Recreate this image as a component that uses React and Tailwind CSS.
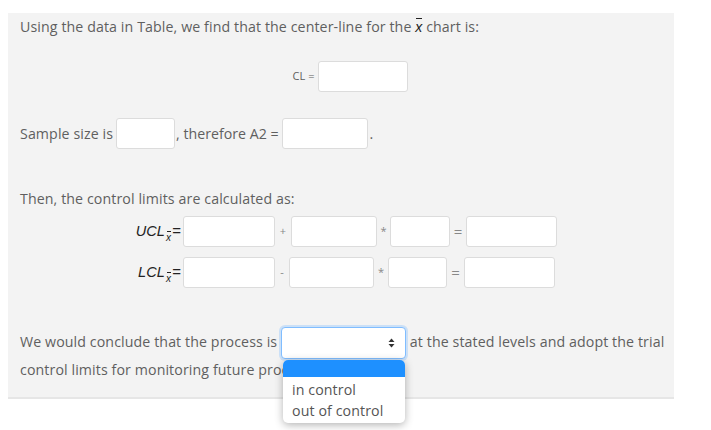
import React from "react";

const font = { fontFamily: '"Open Sans", "Liberation Sans", sans-serif' };

function Box({ w }) {
  return (
    <span
      className={`inline-block h-[31px] bg-white border border-[#dcdcdc] rounded-[3px] align-middle ${w}`}
    />
  );
}

function XBar() {
  return (
    <span className="relative inline-block italic text-[#222] text-[14px]" style={{ fontFamily: '"Liberation Sans", sans-serif' }}>
      <span className="absolute left-[1px] right-0 top-[1px] h-px bg-[#222]" />
      x
    </span>
  );
}

function MathLabel({ name }) {
  return (
    <span className="w-[55px] pr-[2px] flex items-center justify-end text-[#222]" style={{ fontFamily: '"Liberation Sans", sans-serif' }}>
      <span className="italic text-[14.5px]">{name}</span>
      <span className="relative inline-block italic text-[10px] mt-[12px] ml-[1px] leading-none">
        <span className="absolute left-[1px] right-0 -top-[2px] h-px bg-[#222]" />
        x
      </span>
      <span className="text-[15px] ml-[1px]">=</span>
    </span>
  );
}

function Op({ c, w }) {
  return <span className={`text-center text-[11px] text-[#888] ${w}`}>{c}</span>;
}

export default function App() {
  const ops = [
    { label: "UCL", sign: "+", ws: ["w-[92px]", "w-[86px]", "w-[60px]", "w-[91px]"], gaps: ["w-[16px]", "w-[13px]", "w-[16px]"] },
    { label: "LCL", sign: "-", ws: ["w-[92px]", "w-[85px]", "w-[59px]", "w-[91px]"], gaps: ["w-[14px]", "w-[14px]", "w-[17px]"] },
  ];

  return (
    <div className="min-h-[430px] bg-white pt-[13px]" style={font}>
      <div className="ml-[8px] w-[666px] bg-[#f3f3f3] border-b-2 border-[#e6e6e6] pl-[12px] pr-[4px] pt-[4px] pb-[16px] text-[14.2px] tracking-[0.1px] text-[#5f5f5f]">
        <p className="leading-[20px]">
          Using the data in Table, we find that the center-line for the <XBar /> chart is:
        </p>

        <div className="mt-[24px] flex items-center justify-center pl-[10px]">
          <span className="text-[11px] mr-[3px]">CL =</span>
          <Box w="w-[90px]" />
        </div>

        <div className="mt-[26px] flex items-center">
          <span className="mr-[3px]">Sample size is</span>
          <Box w="w-[59px]" />
          <span className="ml-[1px] mr-[3px] tracking-normal">, therefore A2 =</span>
          <Box w="w-[86px]" />
          <span className="ml-[2px]">.</span>
        </div>

        <p className="mt-[40px] leading-[20px]">Then, the control limits are calculated as:</p>

        {ops.map((row, i) => (
          <div key={row.label} className={`flex items-center ml-[108px] ${i === 0 ? "mt-[7px]" : "mt-[10px]"}`}>
            <MathLabel name={row.label} />
            <Box w={row.ws[0]} />
            <Op c={row.sign} w={row.gaps[0]} />
            <Box w={row.ws[1]} />
            <Op c="*" w={row.gaps[1]} />
            <Box w={row.ws[2]} />
            <span className={`text-center text-[15px] text-[#888] ${row.gaps[2]}`}>=</span>
            <Box w={row.ws[3]} />
          </div>
        ))}

        <p className="mt-[39px] leading-[22px]">
          We would conclude that the process is{" "}
          <span className="relative inline-block align-middle">
            <span className="flex items-center justify-end w-[125px] h-[32px] bg-white border border-[#80bdff] rounded-[4px] shadow-[0_0_0_2px_rgba(128,189,255,0.35)] pr-[10px]">
              <svg width="7" height="10" viewBox="0 0 7 10">
                <path d="M3.5 0.5 L6.5 4 H0.5 Z" fill="#333" />
                <path d="M3.5 9.5 L6.5 6 H0.5 Z" fill="#333" />
              </svg>
            </span>
            <span className="absolute left-[2px] top-[33px] z-10 w-[122px] bg-white rounded-[5px] shadow-[0_2px_8px_rgba(0,0,0,0.3)] overflow-hidden text-[#555] leading-[21px]">
              <span className="block h-[17px] bg-[#1e90ff]" />
              <span className="block px-[9px] pt-[2px]">in control</span>
              <span className="block px-[9px] pb-[2px]">out of control</span>
            </span>
          </span>{" "}
          at the stated levels and adopt the trial control limits for monitoring future process.
        </p>
      </div>
    </div>
  );
}
